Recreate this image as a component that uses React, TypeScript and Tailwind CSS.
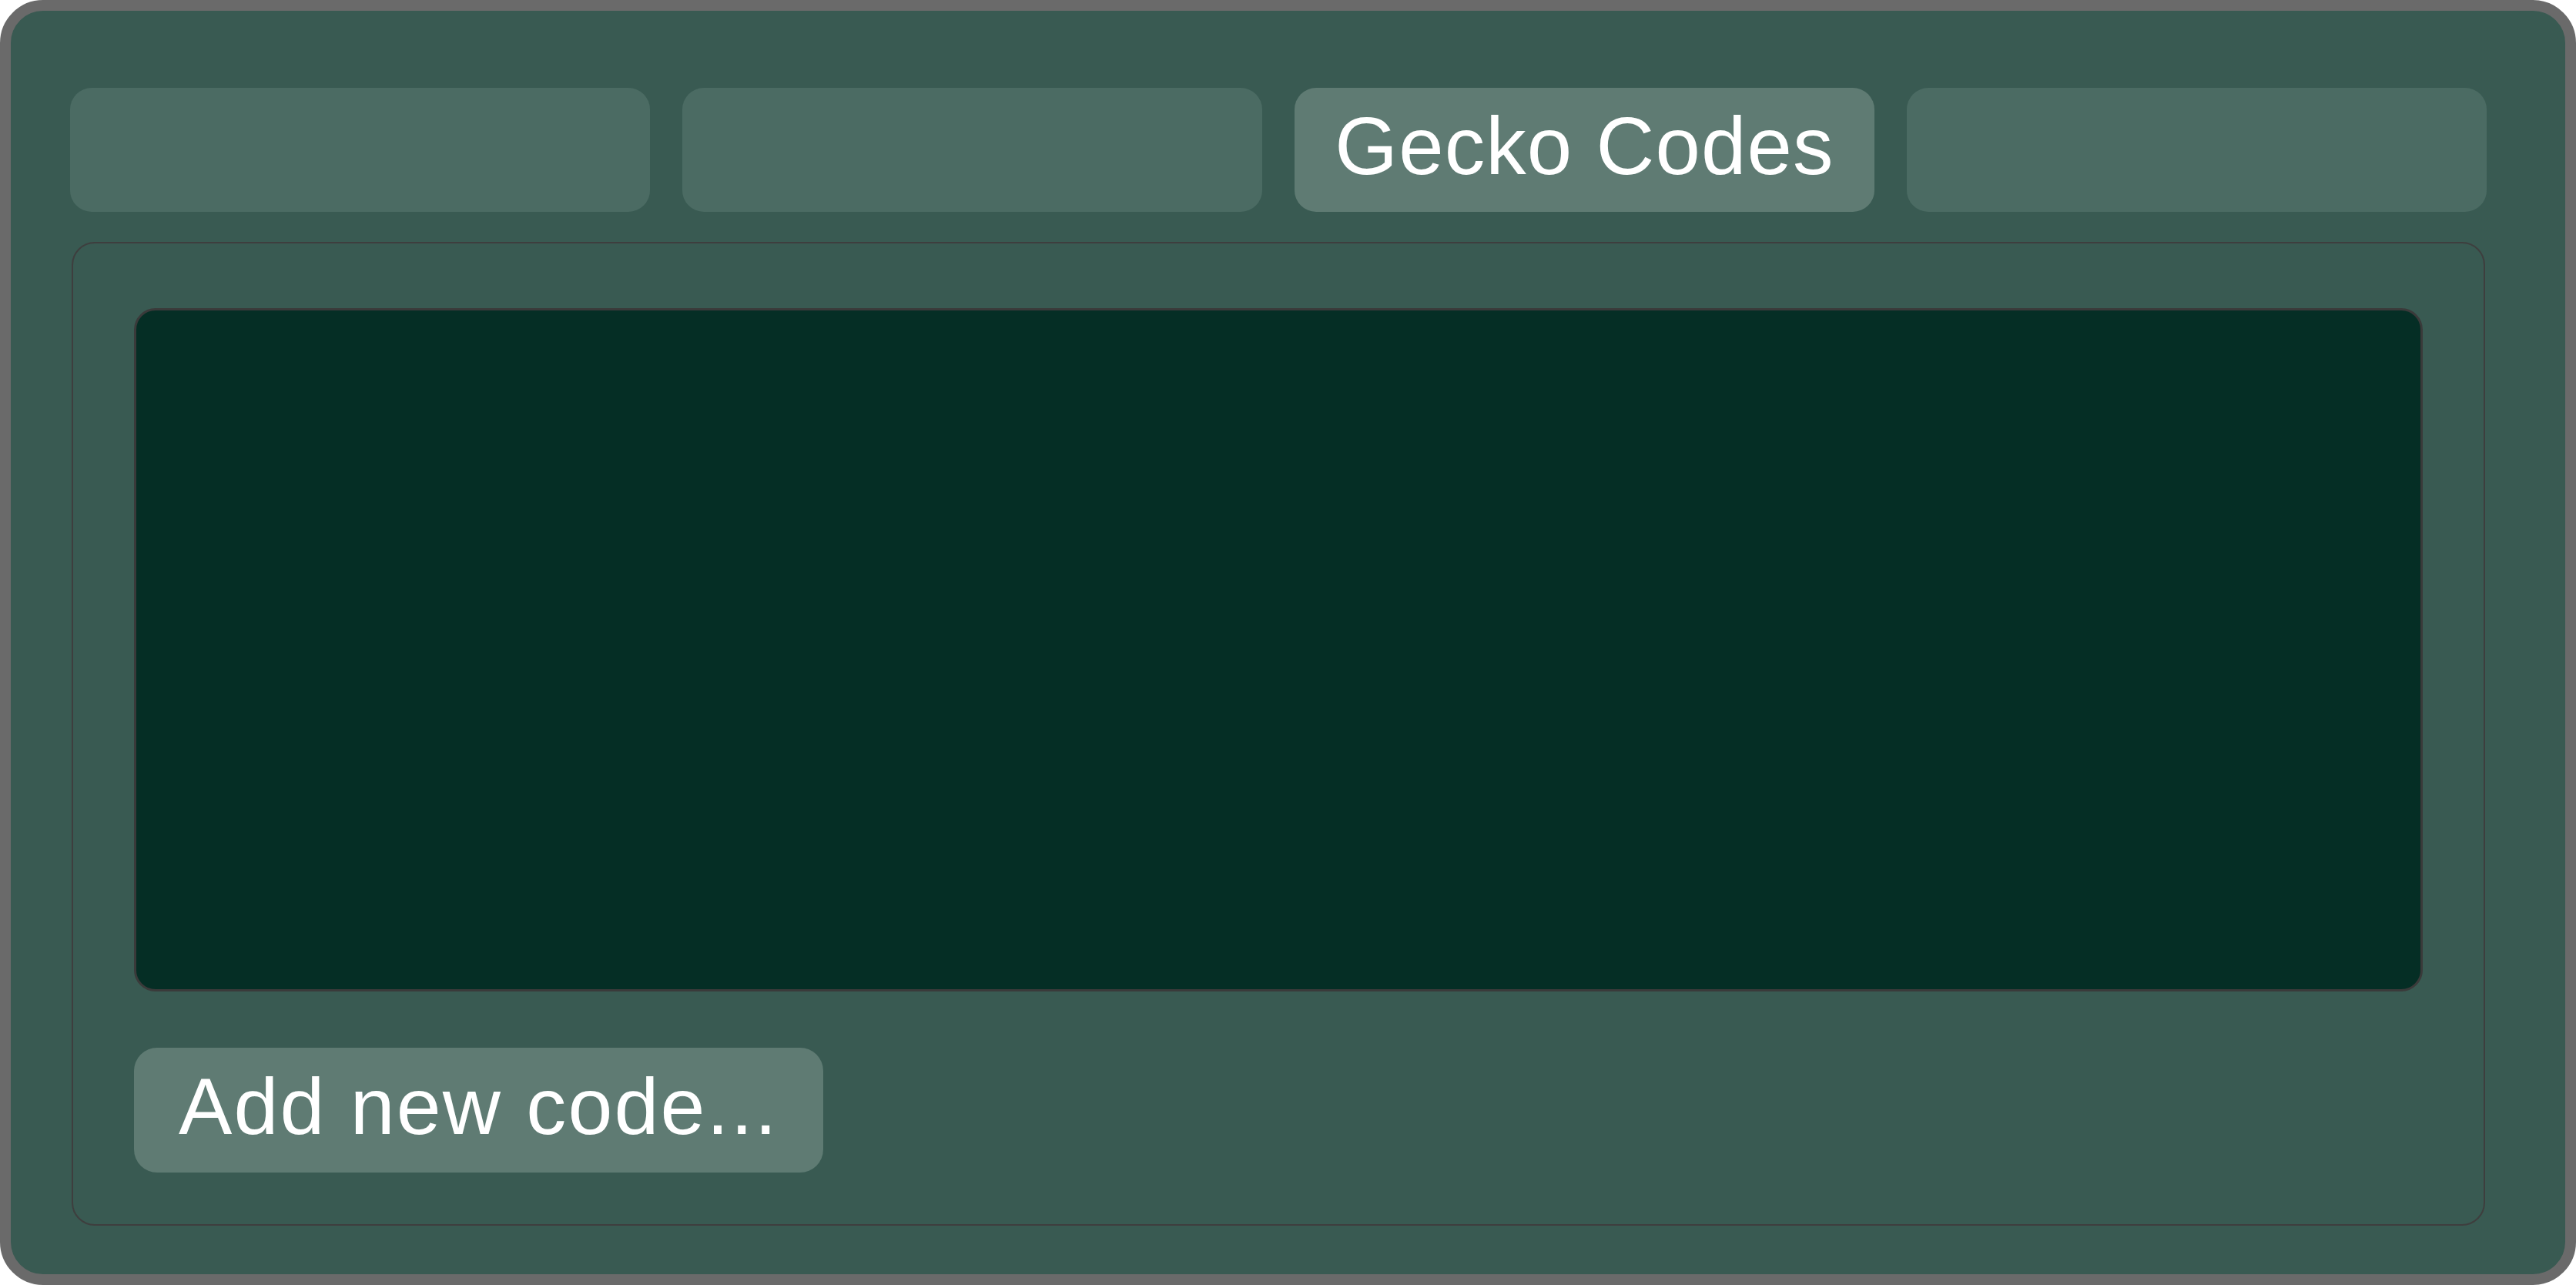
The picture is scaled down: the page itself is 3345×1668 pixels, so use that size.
export default function App() {
  const tabs = ["", "", "Gecko Codes", ""];
  const active = 2;

  return (
    <div className="flex h-[1668px] w-[3345px] flex-col gap-[39px] rounded-[56px] border-[14px] border-[#6a6a6a] bg-[#395a52] pb-[63px] pl-[77px] pr-[102px] pt-[100px] font-['Liberation_Sans',Arial,sans-serif] text-white">
      <div className="grid h-[161px] grid-cols-4 gap-[42px]">
        {tabs.map((label, i) => (
          <button
            key={i}
            className={
              i === active
                ? "flex items-center justify-center rounded-[28px] bg-[#5f7b73] pb-[10px] text-[105px] leading-none tracking-[1.1px]"
                : "flex items-center justify-center rounded-[28px] bg-[#4b6b63] text-[105px] leading-none"
            }
          >
            {label}
          </button>
        ))}
      </div>

      <div className="mx-[2px] flex flex-1 flex-col rounded-[30px] border-2 border-[#3e3e3e] px-[79px] pb-[66px] pt-[84px]">
        <div className="h-[887px] rounded-[28px] border-[3px] border-[#3a3a3a] bg-[#052e25]" />
        <button className="mt-[73px] flex h-[162px] items-center self-start rounded-[30px] bg-[#5f7b73] px-[58px] pb-[10px] text-[104px] leading-none tracking-[2.2px]">
          Add new code...
        </button>
      </div>
    </div>
  );
}
